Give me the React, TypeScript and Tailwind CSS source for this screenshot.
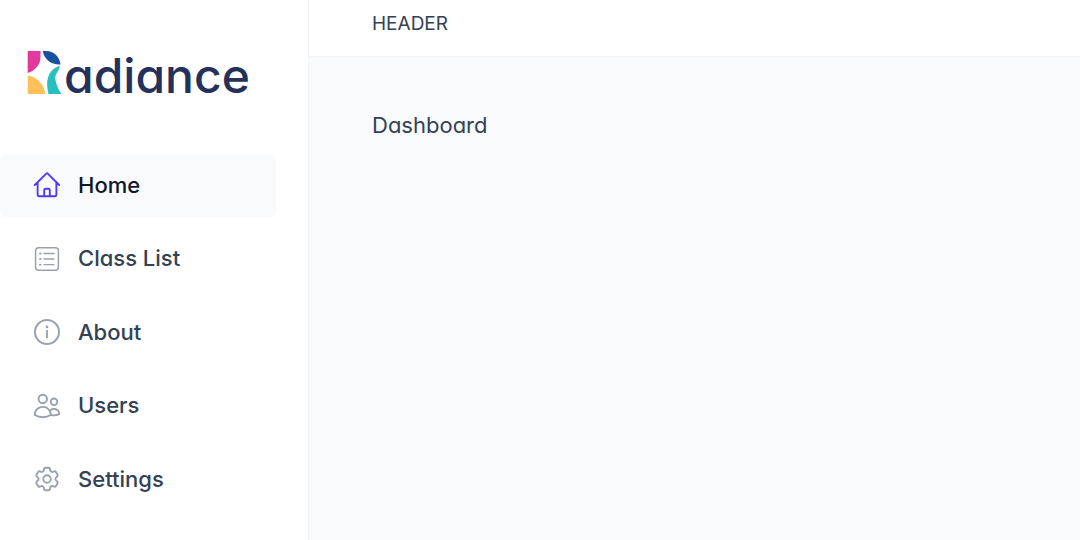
import type { ComponentType } from "react";
import { HiOutlineCog6Tooth, HiOutlineHome, HiOutlineUsers } from "react-icons/hi2";
import clsx from "clsx";

function ListIcon({ className }: { className?: string }) {
  return (
    <svg viewBox="0 0 30 30" className={className} fill="none" stroke="currentColor" strokeLinecap="round" aria-hidden="true">
      <rect x="3.6" y="3.7" width="22.8" height="22.6" rx="3" strokeWidth="1.5" />
      <path d="M12 9.5H22M12 15H22M12 20.7H22" strokeWidth="1.3" />
      <path d="M8 9.5H8.6M8 15H8.6M8 20.7H8.6" strokeWidth="1.8" />
    </svg>
  );
}

function InfoIcon({ className }: { className?: string }) {
  return (
    <svg viewBox="0 0 30 30" className={className} fill="none" stroke="currentColor" aria-hidden="true">
      <circle cx="15" cy="15" r="12" strokeWidth="2" />
      <path d="M15 13V21" strokeWidth="1.8" />
      <circle cx="15" cy="9.9" r="1.3" fill="currentColor" stroke="none" />
    </svg>
  );
}

type Item = { label: string; icon: ComponentType<{ className?: string }>; active?: boolean };

const items: Item[] = [
  { label: "Home", icon: HiOutlineHome, active: true },
  { label: "Class List", icon: ListIcon },
  { label: "About", icon: InfoIcon },
  { label: "Users", icon: HiOutlineUsers },
  { label: "Settings", icon: HiOutlineCog6Tooth },
];

function Logo() {
  return (
    <div className="flex items-start pl-[27px]">
      <svg viewBox="0 0 35 44" className="h-11 w-[35px] shrink-0" aria-hidden="true">
        <path d="M0.7 0H13.5V6C13.5 13.5 8 20 0.7 22Z" fill="#e2399a" />
        <path d="M15.8 0H19C27 0 32.5 5.5 33.5 13.5C24.5 14 17 8.5 15.8 0Z" fill="#1b4f9f" />
        <path d="M0.7 24.5C10 26 17 33 18.3 43H0.7Z" fill="#fdc05a" />
        <path d="M33 15C31.5 21 27.5 23.5 28.3 28C29 33 31.5 39 34.5 43H21.5C20 37 19.5 31 21 26.5C23 20.5 27 16 33 15Z" fill="#28bfc1" />
      </svg>
      <span className="pl-0.5 text-5xl leading-[50px] font-medium text-[#24315a]">adiance</span>
    </div>
  );
}

function NavItem({ label, icon: Icon, active }: Item) {
  return (
    <li>
      <a
        href="#"
        aria-current={active ? "page" : undefined}
        className={clsx(
          "flex h-[62px] items-center gap-4 rounded-md pb-0.5 pl-8 text-[22px] font-medium",
          active ? "bg-[#f9fafc] text-gray-900" : "text-[#334155]",
        )}
      >
        <Icon className={clsx("size-[30px] shrink-0", active ? "text-indigo-600" : "text-gray-400")} />
        {label}
      </a>
    </li>
  );
}

export default function App() {
  return (
    <div className="flex min-h-screen bg-[#f8fafc] font-['Inter',sans-serif] text-[#334155] [font-feature-settings:'cv11']">
      <aside className="w-[309px] shrink-0 border-r border-gray-100 bg-white pt-[51px]">
        <Logo />
        <nav className="pt-[54px] pr-8">
          <ul className="flex h-[356px] flex-col justify-between">
            {items.map((item) => (
              <NavItem key={item.label} {...item} />
            ))}
          </ul>
        </nav>
      </aside>
      <div className="flex min-w-0 flex-1 flex-col">
        <header className="h-[57px] border-b border-gray-100 bg-white px-[63px] pt-2 text-[19px] leading-8">
          HEADER
        </header>
        <main className="flex-1 px-[63px] pt-[52px] text-[22px] leading-8">
          <h1>Dashboard</h1>
        </main>
      </div>
    </div>
  );
}
